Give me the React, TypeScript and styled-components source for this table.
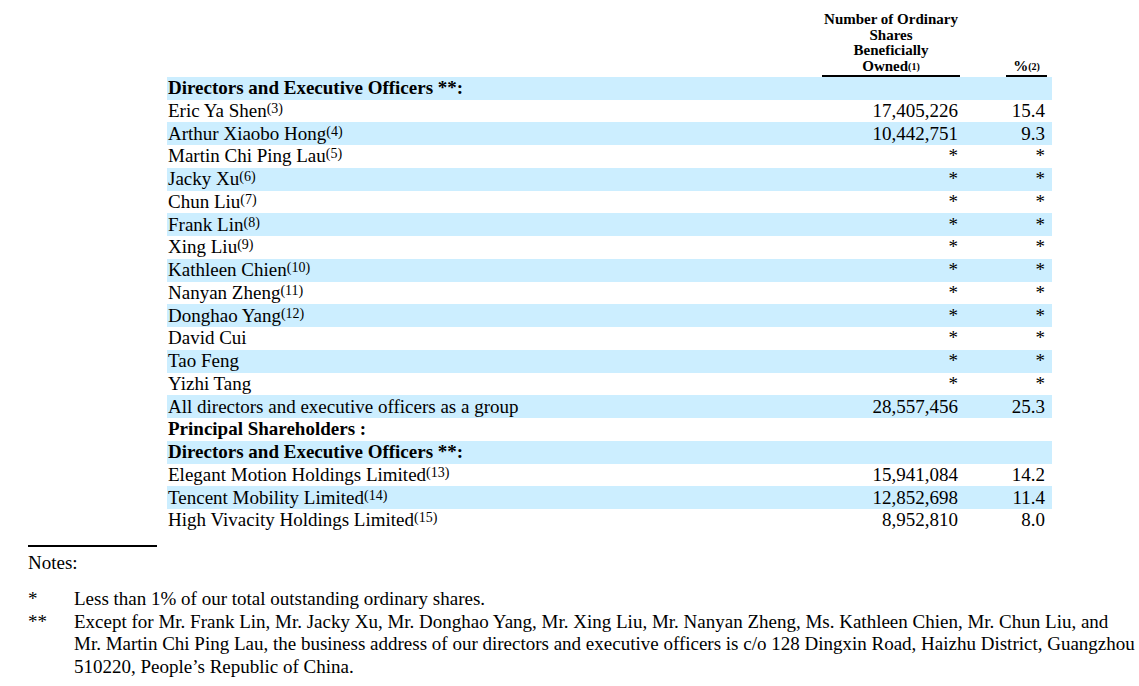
import styled, { createGlobalStyle } from "styled-components";

const GlobalStyle = createGlobalStyle`
  body {
    margin: 0;
    background: #ffffff;
    font-family: "Liberation Serif", "Times New Roman", serif;
    color: #000000;
  }
`;

const Page = styled.div`
  width: 1139px;
  height: 686px;
  overflow: hidden;
  padding-top: 12px;
  box-sizing: border-box;
`;

const Table = styled.div`
  margin-left: 167px;
  width: 885px;
`;

const cols = "655px 138px 46px 41px 5px";

const HeadRow = styled.div`
  display: grid;
  grid-template-columns: ${cols};
  align-items: end;
`;

const HeadCell = styled.div<{ $col: number }>`
  grid-column: ${(p) => p.$col};
  font-weight: bold;
  font-size: 15px;
  line-height: 15.7px;
  text-align: center;
  border-bottom: 2px solid #000;
`;

const Row = styled.div<{ $band?: boolean }>`
  display: grid;
  grid-template-columns: ${cols};
  height: 22.75px;
  align-items: center;
  background: ${(p) => (p.$band ? "#cceeff" : "transparent")};
  font-size: 19px;
  line-height: 22px;
`;

const Label = styled.div<{ $bold?: boolean }>`
  padding-left: 1px;
  font-weight: ${(p) => (p.$bold ? "bold" : "normal")};
  white-space: nowrap;
`;

const Num = styled.div<{ $col: number }>`
  grid-column: ${(p) => p.$col};
  text-align: right;
  padding-right: 2px;
  white-space: nowrap;
`;

const Sup = styled.span`
  font-size: 14px;
  vertical-align: 4px;
  line-height: 0;
`;

const HeadSup = styled.span`
  font-size: 10px;
  vertical-align: 1px;
`;

const Notes = styled.div`
  margin-left: 28px;
  margin-top: 13px;
  font-size: 19px;
  line-height: 22.5px;
`;

const Rule = styled.div`
  width: 129px;
  border-top: 2px solid #000;
  margin-bottom: 5px;
`;

const NotesTitle = styled.div`
  margin-bottom: 14px;
`;

const Note = styled.div`
  display: grid;
  grid-template-columns: 46px 1064px;
`;

type Item = {
  label: string;
  sup?: string;
  num?: string;
  pct?: string;
  bold?: boolean;
};

const rows: Item[] = [
  { label: "Directors and Executive Officers **:", bold: true },
  { label: "Eric Ya Shen", sup: "(3)", num: "17,405,226", pct: "15.4" },
  { label: "Arthur Xiaobo Hong", sup: "(4)", num: "10,442,751", pct: "9.3" },
  { label: "Martin Chi Ping Lau", sup: "(5)", num: "*", pct: "*" },
  { label: "Jacky Xu", sup: "(6)", num: "*", pct: "*" },
  { label: "Chun Liu", sup: "(7)", num: "*", pct: "*" },
  { label: "Frank Lin", sup: "(8)", num: "*", pct: "*" },
  { label: "Xing Liu", sup: "(9)", num: "*", pct: "*" },
  { label: "Kathleen Chien", sup: "(10)", num: "*", pct: "*" },
  { label: "Nanyan Zheng", sup: "(11)", num: "*", pct: "*" },
  { label: "Donghao Yang", sup: "(12)", num: "*", pct: "*" },
  { label: "David Cui", num: "*", pct: "*" },
  { label: "Tao Feng", num: "*", pct: "*" },
  { label: "Yizhi Tang", num: "*", pct: "*" },
  { label: "All directors and executive officers as a group", num: "28,557,456", pct: "25.3" },
  { label: "Principal Shareholders :", bold: true },
  { label: "Directors and Executive Officers **:", bold: true },
  { label: "Elegant Motion Holdings Limited", sup: "(13)", num: "15,941,084", pct: "14.2" },
  { label: "Tencent Mobility Limited", sup: "(14)", num: "12,852,698", pct: "11.4" },
  { label: "High Vivacity Holdings Limited", sup: "(15)", num: "8,952,810", pct: "8.0" },
];

export default function App() {
  return (
    <Page>
      <GlobalStyle />
      <Table>
        <HeadRow>
          <HeadCell $col={2}>
            Number of Ordinary
            <br />
            Shares
            <br />
            Beneficially
            <br />
            Owned<HeadSup>(1)</HeadSup>
          </HeadCell>
          <HeadCell $col={4}>
            %<HeadSup>(2)</HeadSup>
          </HeadCell>
        </HeadRow>
        {rows.map((r, i) => (
          <Row key={i} $band={i % 2 === 0}>
            <Label $bold={r.bold}>
              {r.label}
              {r.sup && <Sup>{r.sup}</Sup>}
            </Label>
            <Num $col={2}>{r.num}</Num>
            <Num $col={4}>{r.pct}</Num>
          </Row>
        ))}
      </Table>
      <Notes>
        <Rule />
        <NotesTitle>Notes:</NotesTitle>
        <Note>
          <span>*</span>
          <span>Less than 1% of our total outstanding ordinary shares.</span>
        </Note>
        <Note>
          <span>**</span>
          <span>
            Except for Mr. Frank Lin, Mr. Jacky Xu, Mr. Donghao Yang, Mr. Xing Liu, Mr. Nanyan Zheng, Ms. Kathleen
            Chien, Mr. Chun Liu, and Mr. Martin Chi Ping Lau, the business address of our directors and executive
            officers is c/o 128 Dingxin Road, Haizhu District, Guangzhou 510220, People’s Republic of China.
          </span>
        </Note>
      </Notes>
    </Page>
  );
}
